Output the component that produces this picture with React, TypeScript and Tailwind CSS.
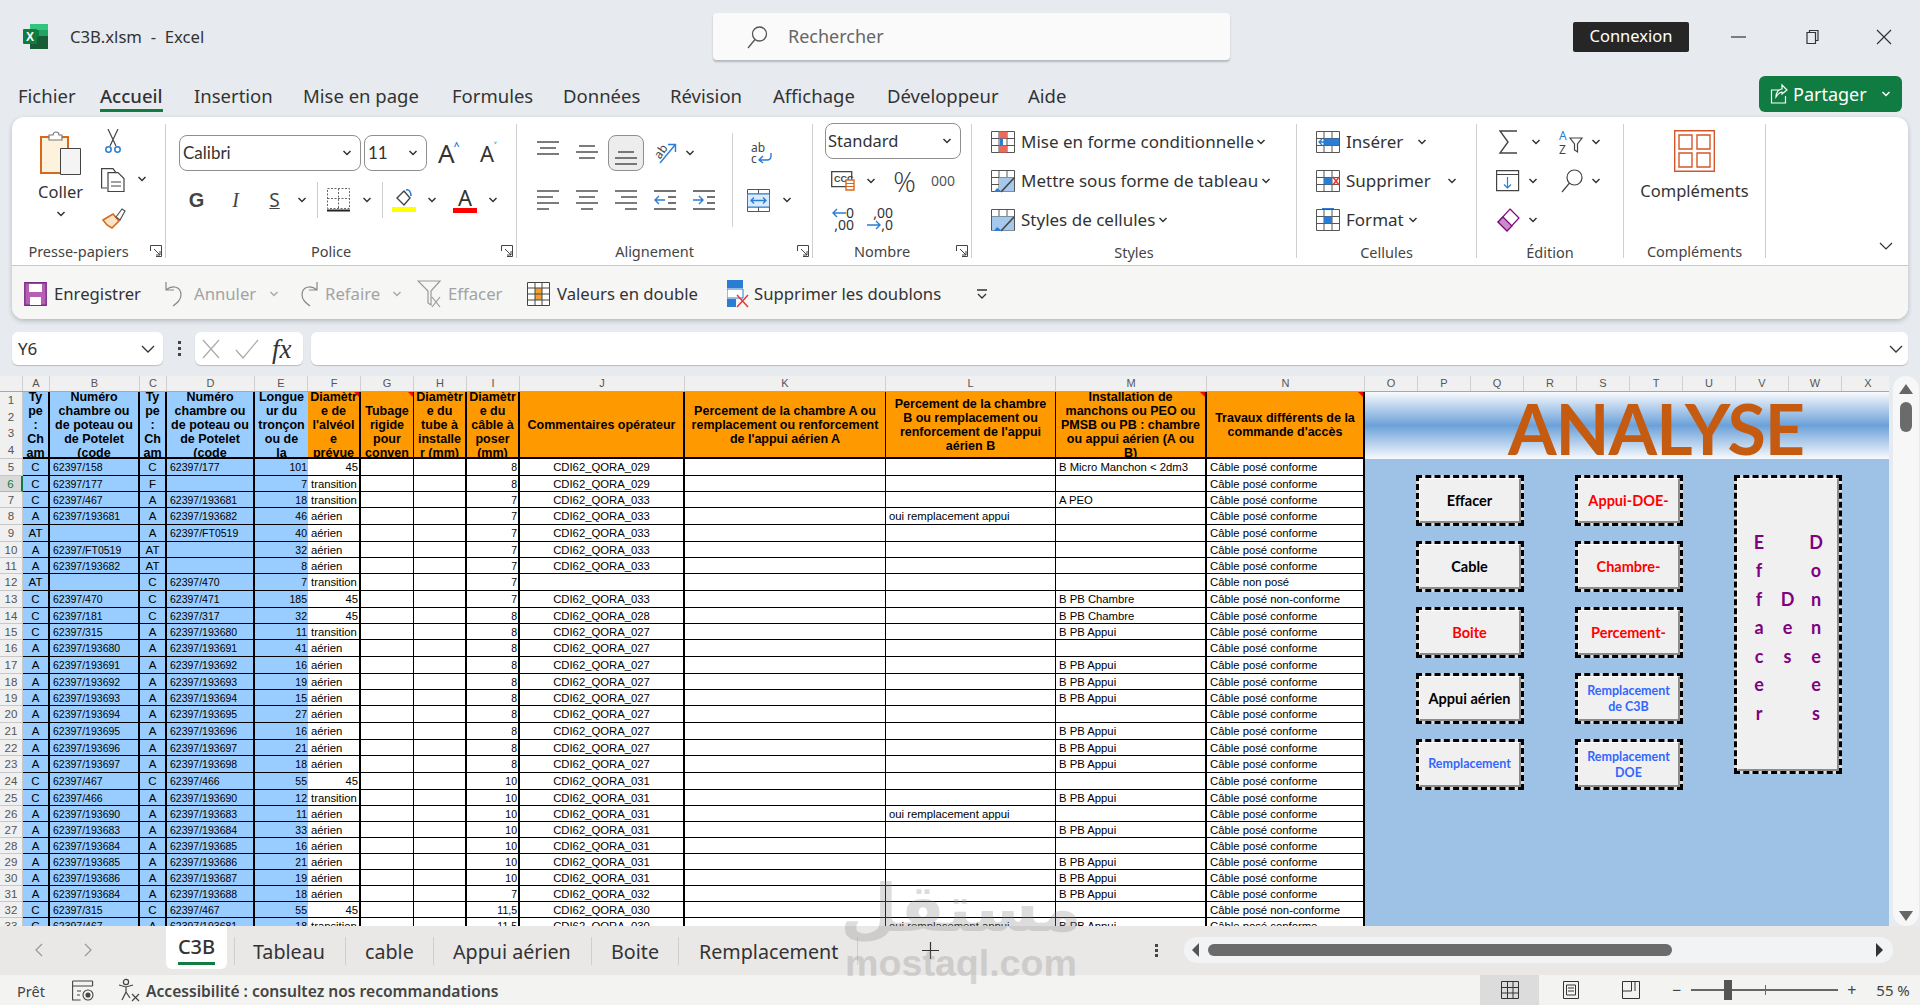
import type { ReactNode } from "react"

const Chev = ({ className = "" }: { className?: string }) => (
  <svg viewBox="0 0 10 6" className={`h-[6px] w-[10px] shrink-0 ${className}`} fill="none" stroke="#333" strokeWidth="1.5">
    <path d="M1.5 1l3.5 3.5L8.5 1" />
  </svg>
)

const Launcher = () => (
  <svg viewBox="0 0 12 12" className="h-3 w-3" fill="none" stroke="#444" strokeWidth="1">
    <path d="M.5 6V.5h11v11H6M4 4l6 6M10 6v4H6" />
  </svg>
)

function Lines({ rows, h = 14 }: { rows: number[][]; h?: number }) {
  return (
    <svg viewBox={`0 0 22 ${h}`} className="w-[22px] shrink-0" style={{ height: h }} fill="none" stroke="#444" strokeWidth="1.4">
      {rows.map((r, i) => (
        <path key={i} d={`M${r[0]} ${r[2]}H${r[1]}`} />
      ))}
    </svg>
  )
}

const GridIcon = ({ children }: { children?: ReactNode }) => (
  <svg viewBox="0 0 24 24" className="h-6 w-6 shrink-0" fill="none">
    <path d="M.5 1.5h23v21H.5zM.5 8.5h23M.5 15.5h23M8 1.5v21M16 1.5v21" stroke="#555" strokeWidth="1" />
    {children}
  </svg>
)

function Group({ w, label, launcher, children }: { w: string; label: string; launcher?: boolean; children: ReactNode }) {
  return (
    <div className={`flex h-[134px] shrink-0 flex-col border-r border-[#cfcfcf] ${w}`}>
      <div className="flex-1">{children}</div>
      <div className={`relative h-[20px] pt-[3px] text-center text-[14.5px] leading-[20px] text-[#444] ${launcher ? "pr-[20px]" : ""}`}>
        {label}
        {launcher && (
          <span className="absolute right-[3px] top-[7px]">
            <Launcher />
          </span>
        )}
      </div>
    </div>
  )
}

const Sep = ({ className = "" }: { className?: string }) => <div className={`w-px shrink-0 bg-[#cfcfcf] ${className}`} />

const cols = "grid-cols-[23px_27px_90px_27px_88px_53px_53px_53px_53px_53px_165px_201px_170px_151px_158px]"

const headers: { lines: string[]; blue?: boolean; border: string; note?: boolean }[] = [
  { lines: ["Ty", "pe", ":", "Ch", "am"], blue: true, border: "border-r-2" },
  { lines: ["Numéro", "chambre ou", "de poteau ou", "de Potelet", "(code"], blue: true, border: "border-r-2" },
  { lines: ["Ty", "pe", ":", "Ch", "am"], blue: true, border: "border-r-2" },
  { lines: ["Numéro", "chambre ou", "de poteau ou", "de Potelet", "(code"], blue: true, border: "border-r-2" },
  { lines: ["Longue", "ur du", "tronçon", "ou de", "la"], blue: true, border: "" },
  { lines: ["Diamètr", "e de", "l'alvéol", "e", "prévue"], border: "border-r-2", note: true },
  { lines: ["\u00a0", "Tubage", "rigide", "pour", "conven"], border: "border-r", note: true },
  { lines: ["Diamètr", "e du", "tube à", "installe", "r (mm)"], border: "border-r-2" },
  { lines: ["Diamètr", "e du", "câble à", "poser", "(mm)"], border: "border-r-2" },
  { lines: ["Commentaires opérateur"], border: "border-r-2" },
  { lines: ["Percement de la chambre A ou", "remplacement ou renforcement", "de l'appui aérien A"], border: "border-r" },
  { lines: ["Percement de la chambre", "B ou remplacement ou", "renforcement de l'appui", "aérien B"], border: "border-r" },
  { lines: ["Installation de", "manchons ou PEO ou", "PMSB ou PB : chambre", "ou appui aérien (A ou", "B)"], border: "border-r-2", note: true },
  { lines: ["Travaux différents de la", "commande d'accès"], border: "border-r-2", note: true },
]

type Row = { n: number; h: number; a: string; b: string; c: string; d: string; e: string; f: string; i: string; j: string; l?: string; m?: string; k?: string }

const conf = "Câble posé conforme"
const nonConf = "Câble posé non-conforme"
const OUI = "oui remplacement appui"
const PB = "B PB Appui"
const P = "62397/"
const H = "62397/193"

const rows: Row[] = [
  { n: 5, h: 17, a: "C", b: P + "158", c: "C", d: P + "177", e: "101", f: "45", i: "8", j: "029", m: "B Micro Manchon < 2dm3" },
  { n: 6, h: 16, a: "C", b: P + "177", c: "F", d: "", e: "7", f: "transition", i: "8", j: "029" },
  { n: 7, h: 16, a: "C", b: P + "467", c: "A", d: H + "681", e: "18", f: "transition", i: "7", j: "033", m: "A PEO" },
  { n: 8, h: 17, a: "A", b: H + "681", c: "A", d: H + "682", e: "46", f: "aérien", i: "7", j: "033", l: OUI },
  { n: 9, h: 17, a: "AT", b: "", c: "A", d: P + "FT0519", e: "40", f: "aérien", i: "7", j: "033" },
  { n: 10, h: 16, a: "A", b: P + "FT0519", c: "AT", d: "", e: "32", f: "aérien", i: "7", j: "033" },
  { n: 11, h: 16, a: "A", b: H + "682", c: "AT", d: "", e: "8", f: "aérien", i: "7", j: "033" },
  { n: 12, h: 17, a: "AT", b: "", c: "C", d: P + "470", e: "7", f: "transition", i: "7", j: "", k: "Câble non posé" },
  { n: 13, h: 17, a: "C", b: P + "470", c: "C", d: P + "471", e: "185", f: "45", i: "7", j: "033", m: "B PB Chambre", k: nonConf },
  { n: 14, h: 16, a: "C", b: P + "181", c: "C", d: P + "317", e: "32", f: "45", i: "8", j: "028", m: "B PB Chambre" },
  { n: 15, h: 16, a: "C", b: P + "315", c: "A", d: H + "680", e: "11", f: "transition", i: "8", j: "027", m: PB },
  { n: 16, h: 17, a: "A", b: H + "680", c: "A", d: H + "691", e: "41", f: "aérien", i: "8", j: "027" },
  { n: 17, h: 17, a: "A", b: H + "691", c: "A", d: H + "692", e: "16", f: "aérien", i: "8", j: "027", m: PB },
  { n: 18, h: 16, a: "A", b: H + "692", c: "A", d: H + "693", e: "19", f: "aérien", i: "8", j: "027", m: PB },
  { n: 19, h: 16, a: "A", b: H + "693", c: "A", d: H + "694", e: "15", f: "aérien", i: "8", j: "027", m: PB },
  { n: 20, h: 17, a: "A", b: H + "694", c: "A", d: H + "695", e: "27", f: "aérien", i: "8", j: "027" },
  { n: 21, h: 17, a: "A", b: H + "695", c: "A", d: H + "696", e: "16", f: "aérien", i: "8", j: "027", m: PB },
  { n: 22, h: 16, a: "A", b: H + "696", c: "A", d: H + "697", e: "21", f: "aérien", i: "8", j: "027", m: PB },
  { n: 23, h: 17, a: "A", b: H + "697", c: "A", d: H + "698", e: "18", f: "aérien", i: "8", j: "027", m: PB },
  { n: 24, h: 17, a: "C", b: P + "467", c: "C", d: P + "466", e: "55", f: "45", i: "10", j: "031" },
  { n: 25, h: 16, a: "C", b: P + "466", c: "A", d: H + "690", e: "12", f: "transition", i: "10", j: "031", m: PB },
  { n: 26, h: 16, a: "A", b: H + "690", c: "A", d: H + "683", e: "11", f: "aérien", i: "10", j: "031", l: OUI },
  { n: 27, h: 16, a: "A", b: H + "683", c: "A", d: H + "684", e: "33", f: "aérien", i: "10", j: "031", m: PB },
  { n: 28, h: 16, a: "A", b: H + "684", c: "A", d: H + "685", e: "16", f: "aérien", i: "10", j: "031" },
  { n: 29, h: 16, a: "A", b: H + "685", c: "A", d: H + "686", e: "21", f: "aérien", i: "10", j: "031", m: PB },
  { n: 30, h: 16, a: "A", b: H + "686", c: "A", d: H + "687", e: "19", f: "aérien", i: "10", j: "031", m: PB },
  { n: 31, h: 16, a: "A", b: H + "684", c: "A", d: H + "688", e: "18", f: "aérien", i: "7", j: "032", m: PB },
  { n: 32, h: 16, a: "C", b: P + "315", c: "C", d: P + "467", e: "55", f: "45", i: "11,5", j: "030", k: nonConf },
  { n: 33, h: 16, a: "C", b: P + "467", c: "A", d: H + "681", e: "18", f: "transition", i: "11,5", j: "030", l: OUI, m: PB },
]

function SheetRow({ r }: { r: Row }) {
  const base = "overflow-hidden whitespace-nowrap border-b border-black leading-[16px] text-black"
  const blue = `${base} bg-[#99ccff]`
  const white = `${base} bg-white`
  const num = r.f === "45"
  return (
    <div className={`grid ${cols} ${r.h === 17 ? "h-[17px] grid-rows-[17px]" : "h-[16px] grid-rows-[16px]"} font-['Liberation_Sans',sans-serif]`}>
      <div className={`overflow-hidden border-b border-r text-center text-[11.5px] leading-[16px] ${r.n === 6 ? "border-b-[#b5b5b5] border-r-2 border-r-[#107c41] bg-[#d9d9d9] text-[#107c41]" : "border-[#c8c8c8] bg-[#f0f0f0] text-[#555]"}`}>{r.n}</div>
      <div className={`${blue} border-r-2 text-center text-[11.5px]`}>{r.a}</div>
      <div className={`${blue} border-r-2 pl-[3px] text-[10.5px]`}>{r.b}</div>
      <div className={`${blue} border-r-2 text-center text-[11.5px]`}>{r.c}</div>
      <div className={`${blue} border-r-2 pl-[3px] text-[10.5px]`}>{r.d}</div>
      <div className={`${blue} pr-px text-right text-[10.5px]`}>{r.e}</div>
      <div className={`${white} border-r-2 text-[11.3px] ${num ? "pr-px text-right text-[10.5px]" : "pl-[3px]"}`}>{r.f}</div>
      <div className={`${white} border-r`} />
      <div className={`${white} border-r-2`} />
      <div className={`${white} border-r-2 pr-px text-right text-[10.5px]`}>{r.i}</div>
      <div className={`${white} border-r-2 text-center text-[11.3px]`}>{r.j ? `CDI62_QORA_${r.j}` : ""}</div>
      <div className={`${white} border-r`} />
      <div className={`${white} border-r pl-[3px] text-[11.3px]`}>{r.l}</div>
      <div className={`${white} border-r-2 pl-[3px] text-[11.3px]`}>{r.m}</div>
      <div className={`${white} border-r-2 pl-[3px] text-[11.3px]`}>{r.k ?? conf}</div>
    </div>
  )
}

function MacroButton({ children, className = "", color }: { children: ReactNode; className?: string; color: string }) {
  return (
    <div className={`border-[3px] border-dashed border-black bg-[#dcdcdc] ${className}`}>
      <div className={`flex h-full w-full items-center justify-center border-b-2 border-l border-r-2 border-t border-b-[#8c8c8c] border-l-white border-r-[#8c8c8c] border-t-white bg-[#f0f0f0] pt-px text-center font-['Lato',sans-serif] font-bold ${color}`}>
        {children}
      </div>
    </div>
  )
}

const Letters = ({ text }: { text: string }) => (
  <div className="flex w-[28.5px] flex-col items-center text-[18px] font-bold leading-[28.5px] text-[#800080]">
    {text.split("").map((c, i) => (
      <span key={i}>{c}</span>
    ))}
  </div>
)

const tabs = [
  { label: "Fichier", w: "w-[82px]", active: false },
  { label: "Accueil", w: "w-[94px]", active: true },
  { label: "Insertion", w: "w-[109px]", active: false },
  { label: "Mise en page", w: "w-[149px]", active: false },
  { label: "Formules", w: "w-[111px]", active: false },
  { label: "Données", w: "w-[107px]", active: false },
  { label: "Révision", w: "w-[103px]", active: false },
  { label: "Affichage", w: "w-[114px]", active: false },
  { label: "Développeur", w: "w-[141px]", active: false },
  { label: "Aide", w: "w-[60px]", active: false },
]

const sheets = [
  { label: "Tableau", w: "w-[111px] pl-[18px]" },
  { label: "cable", w: "w-[88px] pl-[19px]" },
  { label: "Appui aérien", w: "w-[158px] pl-[19px]" },
  { label: "Boite", w: "w-[87px] pl-[19px]" },
  { label: "Remplacement", w: "w-[179px] pl-[20px]" },
]

export default function App() {
  return (
    <div className="relative flex h-[1005px] w-[1920px] flex-col overflow-hidden bg-[#e7ebf0] font-['Noto_Sans',sans-serif] text-[#333]">
      {/* barre de titre */}
      <div className="flex h-[73px] shrink-0 items-center">
        <svg viewBox="0 0 25 25" className="ml-[23px] h-[25px] w-[25px] shrink-0">
          <path d="M7 0h18v25H7z" fill="#185c37" />
          <path d="M7 0h18v6H7z" fill="#33c481" />
          <path d="M16 6h9v6h-9z" fill="#21a366" />
          <path d="M7 6h9v7H7z" fill="#107c41" />
          <rect x="0" y="5" width="14" height="15" rx="1" fill="#107c41" />
          <text x="7" y="16.5" textAnchor="middle" fontSize="12" fontWeight="700" fill="#fff" fontFamily="Liberation Sans">X</text>
        </svg>
        <div className="ml-[22px] w-[643px] whitespace-pre text-[16.7px]">C3B.xlsm  -  Excel</div>
        <div className="flex h-[47px] w-[517px] items-center rounded-[4px] bg-[#fafafa] shadow-[0_2px_2px_rgba(0,0,0,0.22)]">
          <svg viewBox="0 0 24 24" className="ml-[32px] h-6 w-6" fill="none" stroke="#555" strokeWidth="1.3">
            <circle cx="14.5" cy="9" r="7" />
            <path d="M10 14.5L3 23" />
          </svg>
          <span className="ml-[19px] text-[18px] text-[#666]">Rechercher</span>
        </div>
        <div className="ml-[343px] flex h-[30px] w-[116px] items-center justify-center rounded-[2px] bg-[#262626] text-[16.5px] text-white">Connexion</div>
        <svg viewBox="0 0 16 16" className="ml-[42px] h-4 w-4" stroke="#333" strokeWidth="1.2" fill="none"><path d="M0 8h15" /></svg>
        <svg viewBox="0 0 16 16" className="ml-[56px] h-4 w-4" stroke="#333" strokeWidth="1.2" fill="none"><path d="M4 3.5h8.5v11H4zM6.5 3.5v-2H15v10h-2.5" /></svg>
        <svg viewBox="0 0 16 16" className="ml-[57px] h-4 w-4" stroke="#333" strokeWidth="1.2" fill="none"><path d="M1 1l14 14M15 1L1 15" /></svg>
      </div>

      {/* onglets */}
      <div className="flex h-[44px] shrink-0">
        <div className="ml-[18px] flex h-[39px] items-end">
          {tabs.map((t) => (
            <div key={t.label} className={`h-[39px] ${t.w}`}>
              <div className={`inline-block h-[39px] pt-[9px] text-[18.5px] leading-[27px] ${t.active ? "border-b-[3px] border-[#107c41] font-medium" : ""}`}>{t.label}</div>
            </div>
          ))}
        </div>
        <div className="ml-[671px] mt-[3px] flex h-[36px] w-[143px] items-center rounded-[6px] bg-[#107c41] text-white">
          <svg viewBox="0 0 18 22" className="ml-[11px] h-[22px] w-[18px]" fill="none" stroke="#fff" strokeWidth="1.2">
            <path d="M9 7H1.5v13h14v-7M6 14c0-5 3-8 6-8V2l5 5-5 4V9c-2 0-4 2-6 5z" />
          </svg>
          <span className="ml-[5px] text-[18px]">Partager</span>
          <Chev className="ml-[14px] [&>path]:stroke-white" />
        </div>
      </div>

      {/* ruban */}
      <div className="mx-3 flex h-[202px] shrink-0 flex-col rounded-xl bg-white shadow-[0_2px_5px_rgba(0,0,0,0.22)]">
        <div className="flex h-[149px] border-b border-[#c8c8c8] pt-[7px]">
          <Group w="w-[154px]" label="Presse-papiers" launcher>
            <div className="flex">
              <div className="flex w-[91px] flex-col items-center pl-[6px] pt-[6px]">
                <svg viewBox="0 0 41 45" className="h-[45px] w-[41px]">
                  <path d="M1 7h27v36H1z" fill="#fdf2dc" stroke="#d9681d" strokeWidth="2" />
                  <path d="M9 8V5h4a3 3 0 0 1 6 0h3v5H9z" fill="#fff" stroke="#777" strokeWidth="1.2" />
                  <path d="M20.5 18.5h20v26h-20z" fill="#f4f4f4" stroke="#444" />
                </svg>
                <div className="mt-[5px] text-[16.5px] leading-[24px]">Coller</div>
                <Chev className="mt-[7px]" />
              </div>
              <div className="flex flex-col">
                <svg viewBox="0 0 16 24" className="ml-[2px] mt-[5px] h-6 w-4" fill="none">
                  <path d="M3 0l8 17M13 0L5 17" stroke="#444" strokeWidth="1.2" />
                  <circle cx="3.5" cy="20.5" r="2.7" stroke="#2b7cd3" strokeWidth="1.5" />
                  <circle cx="12.5" cy="20.5" r="2.7" stroke="#2b7cd3" strokeWidth="1.5" />
                </svg>
                <div className="-ml-[2px] mt-[15px] flex items-center">
                  <svg viewBox="0 0 24 24" className="h-6 w-6" fill="none" stroke="#444" strokeWidth="1.2">
                    <path d="M6 20H.6V.6H12l3 4" />
                    <path d="M7 4.6h10l6 6v13H7zM10 14h10M10 18h10" />
                  </svg>
                  <Chev className="ml-[12px] -mt-[2px]" />
                </div>
                <svg viewBox="0 0 24 22" className="-ml-px mt-[15px] h-[22px] w-6" fill="none">
                  <path d="M1 13l10-6 6 7-7 7-5-3z" fill="#fbe3c8" stroke="#d9681d" strokeWidth="1.6" />
                  <path d="M14 10l6-8 3 2-5 9z" stroke="#555" strokeWidth="1.2" />
                </svg>
              </div>
            </div>
          </Group>

          <Group w="w-[351px]" label="Police" launcher>
            <div className="mt-[11px] flex h-[36px] items-center pl-[13px]">
              <div className="flex h-[36px] w-[182px] items-center justify-between rounded-[8px] border border-[#8f8f8f] px-[3px] pr-[8px] font-['Lato',sans-serif] text-[17px]">Calibri<Chev /></div>
              <div className="ml-[3px] flex h-[36px] w-[63px] items-center justify-between rounded-[8px] border border-[#8f8f8f] px-[3px] pr-[8px] font-['Lato',sans-serif] text-[17px]">11<Chev /></div>
              <div className="ml-[11px] flex w-[24px] items-start whitespace-nowrap text-[26px] leading-[26px]">A<span className="-ml-[1px] text-[10px] font-bold leading-[12px] text-[#2b7cd3]">^</span></div>
              <div className="ml-[18px] flex w-[20px] items-start whitespace-nowrap text-[22px] leading-[26px]">A<span className="text-[10px] font-bold leading-[12px] text-[#2b7cd3]">˅</span></div>
            </div>
            <div className="mt-[11px] flex h-[36px] items-center pl-[11px]">
              <div className="w-[39px] text-center font-['Liberation_Sans',sans-serif] text-[20px] font-bold text-[#444]">G</div>
              <div className="w-[39px] text-center font-['Liberation_Serif',serif] text-[20px] italic text-[#444]">I</div>
              <div className="w-[39px] text-center text-[19px] text-[#444] underline">S</div>
              <Chev className="ml-[3px]" />
              <Sep className="ml-[10px] h-[36px]" />
              <svg viewBox="0 0 23 24" className="ml-[9px] h-6 w-[23px]" fill="none" stroke="#666" strokeWidth="1" strokeDasharray="2 1.5">
                <path d="M.5.5h22v20H.5zM11.5.5v20M.5 10.5h22" />
                <path d="M0 22.5h23" stroke="#222" strokeWidth="2" strokeDasharray="none" />
              </svg>
              <Chev className="ml-[12px]" />
              <Sep className="ml-[10px] h-[36px]" />
              <svg viewBox="0 0 24 24" className="ml-[9px] h-6 w-6" fill="none">
                <path d="M5 10l7-7 6 7-6 7z" stroke="#444" strokeWidth="1.4" />
                <path d="M14 2c3-1 5 2 5 6" stroke="#2b7cd3" strokeWidth="1.6" />
                <path d="M0 19h24v5H0z" fill="#ffff00" />
              </svg>
              <Chev className="ml-[11px]" />
              <div className="ml-[16px] flex w-6 flex-col items-center">
                <span className="text-[22px] leading-[20px] text-[#333]">A</span>
                <div className="mt-[1px] h-[5px] w-6 bg-[#ff0000]" />
              </div>
              <Chev className="ml-[11px]" />
            </div>
          </Group>

          <Group w="w-[296px]" label="Alignement" launcher>
            <div className="flex">
              <div className="w-[215px]">
                <div className="mt-[11px] flex h-[36px] items-center">
                  <div className="ml-[20px] -mt-[10px]"><Lines rows={[[0, 22, 1], [3, 19, 7], [0, 22, 13]]} /></div>
                  <div className="ml-[17px] -mt-[2px]"><Lines rows={[[3, 19, 1], [0, 22, 7], [3, 19, 13]]} /></div>
                  <div className="ml-[10px] flex h-[36px] w-[36px] items-end justify-center rounded-[8px] border border-[#8f8f8f] bg-[#ededed] pb-[5px]">
                    <Lines rows={[[3, 19, 1], [0, 22, 7], [0, 22, 13]]} />
                  </div>
                  <svg viewBox="0 0 24 22" className="ml-[9px] h-[22px] w-6" fill="none">
                    <text x="2" y="14" fontSize="12" fill="#444" transform="rotate(-55 8 11)" fontFamily="Noto Sans">ab</text>
                    <path d="M7 21L22 3M15 2.5h7.5V10" stroke="#2b7cd3" strokeWidth="1.4" />
                  </svg>
                  <Chev className="ml-[8px]" />
                </div>
                <div className="mt-[11px] flex h-[36px] items-center gap-[17px] pl-[20px]">
                  <Lines h={20} rows={[[0, 22, 1], [0, 16, 7], [0, 22, 13], [0, 12, 19]]} />
                  <Lines h={20} rows={[[0, 22, 1], [3, 19, 7], [0, 22, 13], [5, 17, 19]]} />
                  <Lines h={20} rows={[[0, 22, 1], [6, 22, 7], [0, 22, 13], [10, 22, 19]]} />
                  <svg viewBox="0 0 22 20" className="h-5 w-[22px]" fill="none" stroke="#444" strokeWidth="1.4">
                    <path d="M0 1h22M14 7h8M14 13h8M0 19h22" />
                    <path d="M11 10H1M5 6l-4 4 4 4" stroke="#2b7cd3" />
                  </svg>
                  <svg viewBox="0 0 22 20" className="h-5 w-[22px]" fill="none" stroke="#444" strokeWidth="1.4">
                    <path d="M0 1h22M14 7h8M14 13h8M0 19h22" />
                    <path d="M0 10h10M6 6l4 4-4 4" stroke="#2b7cd3" />
                  </svg>
                </div>
              </div>
              <Sep className="mt-[9px] h-[94px]" />
              <div>
                <div className="mt-[11px] flex h-[36px] items-center pl-[18px]">
                  <svg viewBox="0 0 21 22" className="h-[22px] w-[21px]" fill="none">
                    <text x="0" y="10" fontSize="12" fill="#444" fontFamily="Noto Sans">ab</text>
                    <text x="0" y="21" fontSize="12" fill="#444" fontFamily="Noto Sans">c</text>
                    <path d="M20 11v3c0 3-2 4-4 4H9M12 14l-4 4 4 3" stroke="#2b7cd3" strokeWidth="1.4" />
                  </svg>
                </div>
                <div className="mt-[11px] flex h-[36px] items-center pl-[14px]">
                  <svg viewBox="0 0 23 23" className="h-[23px] w-[23px]" fill="none">
                    <path d="M.5.5h22v22H.5zM.5 5h22M.5 18h22M11.5.5V5M11.5 18v4.5" stroke="#555" />
                    <path d="M.5 5h22v13H.5z" fill="#dbeafa" stroke="#2b7cd3" />
                    <path d="M4 11.5h15M7 8.5l-3 3 3 3M16 8.5l3 3-3 3" stroke="#2b7cd3" strokeWidth="1.3" />
                  </svg>
                  <Chev className="ml-[12px]" />
                </div>
              </div>
            </div>
          </Group>

          <Group w="w-[159px]" label="Nombre" launcher>
            <div className="-mt-px ml-[12px] flex h-[36px] w-[136px] items-center justify-between rounded-[8px] border border-[#8f8f8f] pl-[2px] pr-[8px] text-[16.5px]">Standard<Chev /></div>
            <div className="mt-[8px] flex h-[28px] items-center pl-[18px]">
              <svg viewBox="0 0 24 20" className="h-5 w-6" fill="none">
                <path d="M.7.7h20v15H.7z" stroke="#444" strokeWidth="1.3" />
                <text x="3" y="11" fontSize="9" fontWeight="700" fill="#444" fontFamily="Liberation Sans">CCC</text>
                <path d="M15 9h8v10h-8z" fill="#fff" stroke="#d9681d" strokeWidth="1.4" />
                <path d="M15 12.5h8M15 15.5h8" stroke="#d9681d" />
              </svg>
              <Chev className="ml-[11px]" />
              <div className="ml-[17px] w-[23px] text-center font-['Open_Sans',sans-serif] text-[28px] font-light leading-[28px]">%</div>
              <div className="ml-[15px] w-6 text-center text-[14px] leading-[28px] text-[#555]">000</div>
            </div>
            <div className="mt-[12px] flex h-[24px] items-center pl-[18px] text-[14px] leading-[12px]">
              <div className="flex h-6 w-[23px] flex-col items-end">
                <span className="flex items-center">
                  <svg viewBox="0 0 14 10" className="h-[10px] w-[14px]" fill="none" stroke="#2b7cd3" strokeWidth="1.4"><path d="M14 5H1M5 1L1 5l4 4" /></svg>0
                </span>
                <span>,00</span>
              </div>
              <div className="ml-[16px] flex h-6 w-[23px] flex-col items-end">
                <span>,00</span>
                <span className="flex items-center">
                  <svg viewBox="0 0 14 10" className="h-[10px] w-[14px] shrink-0" fill="none" stroke="#2b7cd3" strokeWidth="1.4"><path d="M0 5h13M9 1l4 4-4 4" /></svg>,0
                </span>
              </div>
            </div>
          </Group>

          <Group w="w-[325px]" label="Styles">
            <div className="-mt-[2px] text-[17px] leading-[39px]">
              <div className="flex h-[39px] items-center pl-[19px]">
                <GridIcon><path d="M8 1.5h8v7H8zM8 15.5h8v7H8z" fill="#ee6b5a" /><path d="M9 8.5h3v7H9z" fill="#2b7cd3" /></GridIcon>
                <span className="ml-[6px] w-[235px] whitespace-nowrap">Mise en forme conditionnelle</span><Chev />
              </div>
              <div className="flex h-[39px] items-center pl-[19px]">
                <GridIcon><path d="M8 8.5h15v14H8z" fill="#a5c8ec" /><path d="M23 9L10 23" stroke="#444" strokeWidth="1.6" /><path d="M6 19l5 4H3z" fill="#2b7cd3" /></GridIcon>
                <span className="ml-[6px] w-[240px] whitespace-nowrap">Mettre sous forme de tableau</span><Chev />
              </div>
              <div className="flex h-[39px] items-center pl-[19px]">
                <GridIcon><path d="M1 8.5h22v14H1z" fill="#a5c8ec" /><path d="M23 9L10 23" stroke="#444" strokeWidth="1.6" /><path d="M6 19l5 4H3z" fill="#2b7cd3" /></GridIcon>
                <span className="ml-[6px] w-[137px] whitespace-nowrap">Styles de cellules</span><Chev />
              </div>
            </div>
          </Group>

          <Group w="w-[180px]" label="Cellules">
            <div className="-mt-[2px] text-[17px] leading-[39px]">
              <div className="flex h-[39px] items-center pl-[19px]">
                <GridIcon><path d="M8 8.5h15v7H8z" fill="#2b7cd3" /><path d="M13 12H3M6 9l-3 3 3 3" stroke="#2b7cd3" strokeWidth="1.3" /></GridIcon>
                <span className="ml-[6px] w-[71px]">Insérer</span><Chev />
              </div>
              <div className="flex h-[39px] items-center pl-[19px]">
                <GridIcon><path d="M8 8.5h8v7H8z" fill="#2b7cd3" /><path d="M17 8l6 8M23 8l-6 8" stroke="#e53935" strokeWidth="1.6" /></GridIcon>
                <span className="ml-[6px] w-[101px]">Supprimer</span><Chev />
              </div>
              <div className="flex h-[39px] items-center pl-[19px]">
                <GridIcon><path d="M8 8.5h8v7H8z" fill="#2b7cd3" /><path d="M6 0.5h12" stroke="#2b7cd3" /></GridIcon>
                <span className="ml-[6px] w-[62px]">Format</span><Chev />
              </div>
            </div>
          </Group>

          <Group w="w-[147px]" label="Édition">
            <div className="-mt-[2px]">
              <div className="flex h-[39px] items-center pl-[21px]">
                <svg viewBox="0 0 20 24" className="h-6 w-5" fill="none" stroke="#444" strokeWidth="1.4"><path d="M19 1H2l8 11-8 11h17" /></svg>
                <Chev className="ml-[13px]" />
                <svg viewBox="0 0 24 26" className="ml-[18px] h-[26px] w-6" fill="none">
                  <text x="0" y="11" fontSize="12" fill="#2b7cd3" fontFamily="Noto Sans">A</text>
                  <text x="0" y="25" fontSize="12" fill="#444" fontFamily="Noto Sans">Z</text>
                  <path d="M11 9h12l-4.5 6v8l-3-2v-6z" stroke="#444" strokeWidth="1.2" />
                </svg>
                <Chev className="ml-[8px]" />
              </div>
              <div className="flex h-[39px] items-center pl-[19px]">
                <svg viewBox="0 0 24 22" className="h-[22px] w-6" fill="none" stroke="#444" strokeWidth="1.2">
                  <path d="M.6.6h22v20H.6zM.6 4.5h22" />
                  <path d="M11.5 7v11M8 14.5l3.5 3.5 3.5-3.5" stroke="#2b7cd3" />
                </svg>
                <Chev className="ml-[8px]" />
                <svg viewBox="0 0 24 24" className="ml-[22px] h-6 w-6" fill="none" stroke="#444" strokeWidth="1.2"><circle cx="14.5" cy="8.5" r="7.5" /><path d="M9.5 14L2 23" /></svg>
                <Chev className="ml-[7px]" />
              </div>
              <div className="flex h-[39px] items-center pl-[19px]">
                <svg viewBox="0 0 24 24" className="h-6 w-6" fill="none" stroke="#800080" strokeWidth="1.2">
                  <path d="M14 1l9 9-12 13-9-9z" fill="#fff" />
                  <path d="M7 9l9 9-5 5-9-9z" fill="#c58fc5" />
                </svg>
                <Chev className="ml-[8px]" />
              </div>
            </div>
          </Group>

          <Group w="w-[142px]" label="Compléments">
            <div className="flex flex-col items-center pt-[6px]">
              <svg viewBox="0 0 41 42" className="h-[42px] w-[41px]" fill="none" stroke="#d4572a" strokeWidth="1.4">
                <path d="M.7.7h39.6v40.6H.7z" />
                <path d="M5 5h13v14H5zM23 5h13v14H23zM5 23h13v14H5zM23 23h13v14H23z" />
              </svg>
              <div className="mt-[7px] text-[16.5px] leading-[24px]">Compléments</div>
            </div>
          </Group>

          <div className="flex flex-1 items-end justify-end pb-[15px] pr-[15px]">
            <svg viewBox="0 0 14 8" className="h-2 w-[14px]" fill="none" stroke="#333" strokeWidth="1.2"><path d="M1 1l6 6 6-6" /></svg>
          </div>
        </div>

        <div className="flex flex-1 items-center whitespace-nowrap rounded-b-xl bg-[#f6f6f5] pl-[12px] pt-[3px] text-[16.7px]">
          <svg viewBox="0 0 23 24" className="h-6 w-[23px]" fill="none">
            <path d="M.8.8h21.4v22.4H.8z" fill="#b55fb5" stroke="#7b2c84" strokeWidth="1.4" />
            <path d="M5 2h13v8H5zM6 15h11v8H6z" fill="#fff" />
          </svg>
          <span className="ml-[7px] w-[111px]">Enregistrer</span>
          <svg viewBox="0 0 20 26" className="h-[26px] w-5" fill="none" stroke="#888" strokeWidth="1.2"><path d="M1 1v8h8M1 9c6-5 15-4 15 5 0 5-4 8-8 11" /></svg>
          <span className="ml-[9px] w-[75px] text-[#a3a3a3]">Annuler</span>
          <Chev className="[&>path]:stroke-[#aaa]" />
          <svg viewBox="0 0 22 26" className="ml-[17px] h-[26px] w-[22px]" fill="none" stroke="#888" strokeWidth="1.2"><path d="M21 1v8h-8M21 9C15 4 6 5 6 14c0 5 4 8 8 11" /></svg>
          <span className="ml-[7px] w-[67px] text-[#a3a3a3]">Refaire</span>
          <Chev className="[&>path]:stroke-[#aaa]" />
          <svg viewBox="0 0 25 28" className="ml-[15px] h-7 w-[25px]" fill="none" stroke="#999" strokeWidth="1.2"><path d="M1 1h22l-9 10v14l-3-2V11zM15 17l8 10M23 17l-8 10" /></svg>
          <span className="ml-[6px] w-[79px] text-[#a3a3a3]">Effacer</span>
          <svg viewBox="0 0 23 24" className="h-6 w-[23px]" fill="none">
            <path d="M.5.5h22v23H.5z" fill="#fff" stroke="#444" />
            <path d="M8 6h7v12H8z" fill="#f0a030" />
            <path d="M.5 6h22M.5 12h22M.5 18h22M8 .5v23M15 .5v23" stroke="#444" />
          </svg>
          <span className="ml-[7px] w-[170px]">Valeurs en double</span>
          <svg viewBox="0 0 23 28" className="h-7 w-[23px]" fill="none">
            <path d="M0 0h16v8H0z" fill="#2b7cd3" />
            <path d="M0 9h16v9H0z" fill="#fff" stroke="#2b7cd3" />
            <path d="M0 19h9v8H0z" fill="#2b7cd3" />
            <path d="M10 15l11 12M21 15L10 27" stroke="#e53935" strokeWidth="1.5" />
          </svg>
          <span className="ml-[4px] w-[223px]">Supprimer les doublons</span>
          <svg viewBox="0 0 10 11" className="h-[11px] w-[10px]" fill="none" stroke="#333" strokeWidth="1.3"><path d="M0 1h10M1 5l4 4 4-4" /></svg>
        </div>
      </div>

      {/* barre de formule */}
      <div className="mx-3 mt-[13px] flex h-[33px] shrink-0">
        <div className="flex w-[151px] items-center justify-between rounded-[6px] bg-white pl-[6px] pr-[8px] text-[17px] shadow-[0_1px_1px_rgba(0,0,0,0.2)]">
          Y6
          <svg viewBox="0 0 14 8" className="h-2 w-[14px]" fill="none" stroke="#333" strokeWidth="1.3"><path d="M1 1l6 6 6-6" /></svg>
        </div>
        <div className="flex w-[32px] flex-col items-center justify-center gap-[3px]">
          <div className="h-[3px] w-[3px] bg-[#444]" />
          <div className="h-[3px] w-[3px] bg-[#444]" />
          <div className="h-[3px] w-[3px] bg-[#444]" />
        </div>
        <div className="flex w-[108px] items-center rounded-[6px] bg-white pl-[6px] shadow-[0_1px_1px_rgba(0,0,0,0.2)]">
          <svg viewBox="0 0 20 20" className="h-5 w-5" fill="none" stroke="#aaa" strokeWidth="1.2"><path d="M2 1l16 18M18 1L2 19" /></svg>
          <svg viewBox="0 0 24 20" className="ml-[14px] h-5 w-6" fill="none" stroke="#aaa" strokeWidth="1.2"><path d="M1 11l7 8L23 1" /></svg>
          <span className="ml-[13px] font-['Liberation_Serif',serif] text-[27px] italic leading-[30px] text-[#333]">fx</span>
        </div>
        <div className="ml-[8px] flex flex-1 items-center justify-end rounded-[6px] bg-white pr-[5px] shadow-[0_1px_1px_rgba(0,0,0,0.2)]">
          <svg viewBox="0 0 14 8" className="h-2 w-[14px]" fill="none" stroke="#333" strokeWidth="1.3"><path d="M1 1l6 6 6-6" /></svg>
        </div>
      </div>

      {/* feuille */}
      <div className="mt-[11px] flex h-[550px] shrink-0 overflow-hidden">
        <div className="flex w-[1889px] flex-col overflow-hidden">
          <div className="grid h-[16px] shrink-0 grid-cols-[23px_27px_90px_27px_88px_53px_53px_53px_53px_53px_165px_201px_170px_151px_158px_53px_53px_53px_53px_53px_53px_53px_53px_53px_53px] border-b border-[#a8a8a8] bg-[#f0f0f0] font-['Liberation_Sans',sans-serif] text-[11px] leading-[15px] text-[#555]">
            {["", "A", "B", "C", "D", "E", "F", "G", "H", "I", "J", "K", "L", "M", "N", "O", "P", "Q", "R", "S", "T", "U", "V", "W", "X"].map((c, i) => (
              <div key={i} className="border-r border-[#d0d0d0] text-center">{c}</div>
            ))}
          </div>
          <div className="flex min-h-0 flex-1">
            <div className="w-[1365px] shrink-0 overflow-hidden">
              <div className={`grid ${cols} h-[67px]`}>
                <div className="flex flex-col border-b border-r border-[#c8c8c8] bg-[#f0f0f0] text-center font-['Liberation_Sans',sans-serif] text-[11.5px] leading-[16.5px] text-[#555]">
                  <span>1</span><span>2</span><span>3</span><span>4</span>
                </div>
                {headers.map((h, i) => (
                  <div key={i} className={`relative flex items-center justify-center overflow-hidden border-b-2 border-black text-center font-['Liberation_Sans',sans-serif] text-[12.5px] font-bold leading-[14px] text-black ${h.border} ${h.blue ? "bg-[#99ccff]" : "bg-[#ff9900]"}`}>
                    <div className="whitespace-nowrap">
                      {h.lines.map((l, j) => (
                        <div key={j}>{l}</div>
                      ))}
                    </div>
                    {h.note && <div className="absolute right-0 top-0 h-0 w-0 border-l-[5px] border-t-[5px] border-l-transparent border-t-[#ff0000]" />}
                  </div>
                ))}
              </div>
              {rows.map((r) => (
                <SheetRow key={r.n} r={r} />
              ))}
            </div>
            <div className="flex-1 bg-[#9dc2e6]">
              <div className="h-[67px] bg-[linear-gradient(180deg,#f8fafd_0%,#6ba1d9_50%,#f8fafd_100%)] pl-[143px] pt-[2px] font-['Lato',sans-serif] text-[70px] font-bold leading-[68px] tracking-[-1px] text-[#c55a11]">ANALYSE</div>
              <div className="grid grid-cols-[108px_108px_108px] grid-rows-[51px_51px_51px_51px_51px] gap-x-[51px] gap-y-[15px] pl-[51px] pt-[16px] text-[14.5px]">
                <MacroButton color="text-black">Effacer</MacroButton>
                <MacroButton color="text-[#ff0000]">Appui-DOE-</MacroButton>
                <MacroButton className="row-span-5 h-[299px]" color="text-[#800080]">
                  <div className="flex items-center pt-[6px]">
                    <Letters text="Effacer" />
                    <Letters text="Des" />
                    <Letters text="Donnees" />
                  </div>
                </MacroButton>
                <MacroButton color="text-black">Cable</MacroButton>
                <MacroButton color="text-[#ff0000]">Chambre-</MacroButton>
                <MacroButton color="text-[#ff0000]">Boite</MacroButton>
                <MacroButton color="text-[#ff0000]">Percement-</MacroButton>
                <MacroButton color="text-black">Appui aérien</MacroButton>
                <MacroButton color="text-[#3366ff] text-[12.5px] leading-[16px]">Remplacement<br />de C3B</MacroButton>
                <MacroButton color="text-[#3366ff] text-[12.5px]">Remplacement</MacroButton>
                <MacroButton color="text-[#3366ff] text-[12.5px] leading-[16px]">Remplacement<br />DOE</MacroButton>
              </div>
            </div>
          </div>
        </div>
        <div className="flex flex-1 flex-col items-center">
          <div className="ml-[3px] flex h-full w-[26px] flex-col items-center rounded-full bg-[#f7f7f7]">
            <svg viewBox="0 0 14 10" className="mt-[8px] h-[10px] w-[14px]" fill="#666"><path d="M7 0l7 10H0z" /></svg>
            <div className="mt-[8px] h-[30px] w-3 rounded-full bg-[#6b6b6b]" />
            <div className="flex-1" />
            <svg viewBox="0 0 14 10" className="mb-[5px] h-[10px] w-[14px]" fill="#666"><path d="M7 10L14 0H0z" /></svg>
          </div>
        </div>
      </div>

      {/* onglets de feuilles */}
      <div className="flex h-[49px] shrink-0 bg-[#e9e8e6]">
        <div className="flex w-[166px] items-center pb-[1px]">
          <svg viewBox="0 0 8 14" className="ml-[35px] h-[14px] w-2" fill="none" stroke="#999" strokeWidth="1.2"><path d="M7 1L1 7l6 6" /></svg>
          <svg viewBox="0 0 8 14" className="ml-[41px] h-[14px] w-2" fill="none" stroke="#999" strokeWidth="1.2"><path d="M1 1l6 6-6 6" /></svg>
        </div>
        <div className="flex h-[43px] w-[61px] flex-col items-center rounded-b-[6px] bg-white pt-[5px]">
          <span className="text-[20px] font-medium leading-[32px]">C3B</span>
          <div className="-mt-px h-[3px] w-[37px] bg-[#107c41]" />
        </div>
        <div className="ml-[7px] mt-[11px] flex h-[28px] border-l border-[#cfcfcf]">
          {sheets.map((s) => (
            <div key={s.label} className={`whitespace-nowrap border-r border-[#cfcfcf] pt-[2px] text-[19.7px] leading-[26px] ${s.w}`}>{s.label}</div>
          ))}
        </div>
        <svg viewBox="0 0 17 17" className="ml-[64px] mt-[16px] h-[17px] w-[17px]" stroke="#333" strokeWidth="1.2" fill="none"><path d="M8.5 0v17M0 8.5h17" /></svg>
        <div className="ml-[216px] mt-[18px] flex h-[14px] flex-col items-center gap-[2px]">
          <div className="h-[3px] w-[3px] bg-[#444]" />
          <div className="h-[3px] w-[3px] bg-[#444]" />
          <div className="h-[3px] w-[3px] bg-[#444]" />
        </div>
        <div className="ml-[26px] mt-[11px] flex h-[26px] w-[709px] items-center rounded-full bg-[#f1f3f4]">
          <svg viewBox="0 0 7 14" className="ml-[8px] h-[14px] w-[7px]" fill="#555"><path d="M7 0L0 7l7 7z" /></svg>
          <div className="ml-[9px] h-3 w-[464px] rounded-full bg-[#6b6b6b]" />
          <svg viewBox="0 0 7 14" className="ml-[204px] h-[14px] w-[7px]" fill="#333"><path d="M0 0l7 7-7 7z" /></svg>
        </div>
      </div>

      {/* barre d'état */}
      <div className="flex h-[30px] shrink-0 items-center bg-[#f3f3f2] text-[14.5px] text-[#444]">
        <span className="ml-[17px] w-[55px] pt-[3px]">Prêt</span>
        <svg viewBox="0 0 23 24" className="h-6 w-[23px]" fill="none" stroke="#444" strokeWidth="1.1">
          <path d="M.6 3h20M.6 8h20M.6 3v19h8M20.6 3v5M5 13h4M5 17h3" />
          <circle cx="16" cy="17" r="5" /><circle cx="16" cy="17" r="2" fill="#444" />
        </svg>
        <svg viewBox="0 0 22 24" className="ml-[23px] h-6 w-[22px]" fill="none" stroke="#444" strokeWidth="1.2">
          <circle cx="8" cy="4" r="2.6" />
          <path d="M1 7l7 2 7-2M8 9v5l-4 8M8 14l4 6M14 16l7 7M21 16l-7 7" />
        </svg>
        <span className="ml-[6px] w-[1334px] whitespace-nowrap pt-[3px] text-[15.6px] font-semibold">Accessibilité : consultez nos recommandations</span>
        <div className="flex h-[30px] w-[59px] items-center justify-center bg-[#dcdcdc]">
          <svg viewBox="0 0 18 18" className="h-[18px] w-[18px]" fill="none" stroke="#333"><path d="M.5.5h17v17H.5zM.5 6.5h17M.5 12h17M6.5.5v17M12 .5v17" /></svg>
        </div>
        <svg viewBox="0 0 16 18" className="ml-[24px] h-[18px] w-4" fill="none" stroke="#333"><path d="M.5.5h15v17H.5zM3.5 4h9v10h-9zM5 7h6M5 10h6" /></svg>
        <svg viewBox="0 0 18 18" className="ml-[43px] h-[18px] w-[18px]" fill="none" stroke="#333"><path d="M.5.5h17v17H.5zM.5 10h9V.5M13 .5V10" /></svg>
        <span className="ml-[32px] text-[16px]">−</span>
        <div className="relative ml-[10px] h-[2px] w-[147px] bg-[#666]">
          <div className="absolute left-[33px] top-[-9px] h-5 w-2 bg-[#555]" />
          <div className="absolute left-[74px] top-[-4px] h-[10px] w-px bg-[#666]" />
        </div>
        <span className="ml-[9px] text-[16px]">+</span>
        <span className="ml-[20px] whitespace-nowrap text-[15px]">55 %</span>
      </div>

      {/* filigrane */}
      <div className="pointer-events-none absolute left-[845px] top-[868px] flex w-[232px] flex-col items-center text-[#8f8f8f] opacity-30">
        <span className="pt-[6px] font-['DejaVu_Sans',sans-serif] text-[66px] font-bold leading-[70px]">مستقل</span>
        <span className="font-['Liberation_Sans',sans-serif] text-[37.6px] font-bold leading-[38px]">mostaql.com</span>
      </div>
    </div>
  )
}
